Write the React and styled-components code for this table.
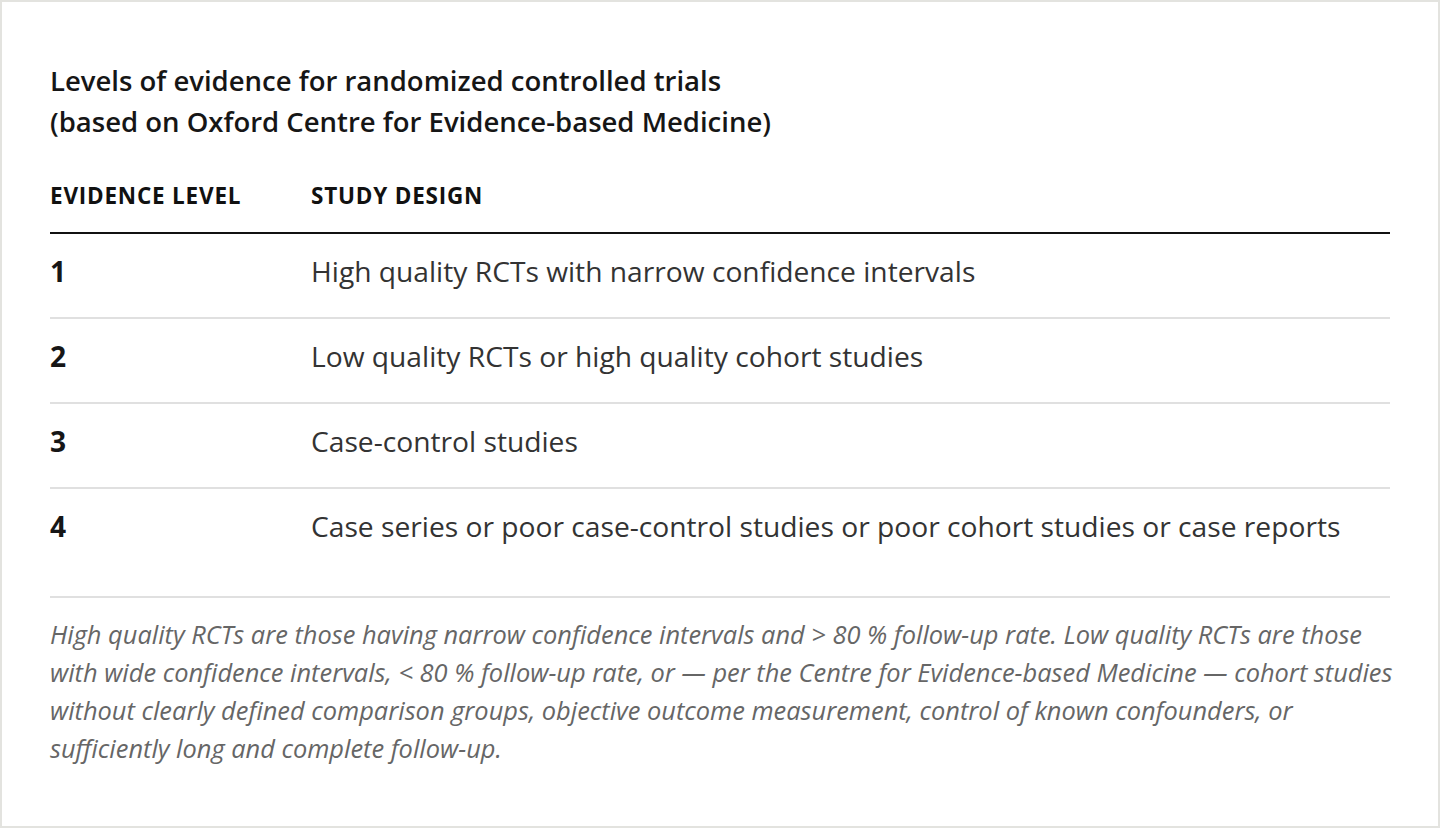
import React from "react";
import styled, { createGlobalStyle } from "styled-components";

const GlobalStyle = createGlobalStyle`
  html, body { margin: 0; padding: 0; background: #ffffff; }
  * { box-sizing: border-box; }
`;

const Frame = styled.div`
  min-height: 100vh;
  border: 2px solid #e3e3df;
  background: #ffffff;
  padding: 58px 48px 40px;
  font-family: "Open Sans", "Noto Sans", sans-serif;
  color: #333333;
`;

const Title = styled.h2`
  margin: 0 0 25px;
  font-size: 27.5px;
  line-height: 41px;
  font-weight: 600;
  color: #161616;
`;

const Table = styled.table`
  width: 100%;
  border-collapse: collapse;
`;

const HeadCell = styled.th`
  text-align: left;
  padding: 14px 0 21px;
  font-size: 22.5px;
  line-height: 30px;
  font-weight: 700;
  letter-spacing: 0.035em;
  text-transform: uppercase;
  color: #111111;
  border-bottom: 2px solid #111111;
  width: ${(p) => (p.$narrow ? "261px" : "auto")};
`;

const Row = styled.tr`
  &:not(:last-child) td { border-bottom: 2px solid #e0e0e0; }
`;

const Cell = styled.td`
  padding: 19px 0 28px;
  font-size: 28.2px;
  line-height: 36px;
  font-weight: ${(p) => (p.$strong ? 700 : 400)};
  color: ${(p) => (p.$strong ? "#161616" : "#333333")};
  vertical-align: top;
`;

const Note = styled.p`
  margin: 24px 0 0;
  padding-top: 17px;
  border-top: 2px solid #e0e0e0;
  font-size: 25.4px;
  line-height: 38px;
  font-style: italic;
  color: #666666;
  white-space: nowrap;
`;

const rows = [
  ["1", "High quality RCTs with narrow confidence intervals"],
  ["2", "Low quality RCTs or high quality cohort studies"],
  ["3", "Case-control studies"],
  ["4", "Case series or poor case-control studies or poor cohort studies or case reports"],
];

export default function App() {
  return (
    <>
      <GlobalStyle />
      <Frame>
        <Title>
          Levels of evidence for randomized controlled trials
          <br />
          (based on Oxford Centre for Evidence-based Medicine)
        </Title>
        <Table>
          <thead>
            <tr>
              <HeadCell $narrow>Evidence level</HeadCell>
              <HeadCell>Study design</HeadCell>
            </tr>
          </thead>
          <tbody>
            {rows.map(([lvl, txt]) => (
              <Row key={lvl}>
                <Cell $strong>{lvl}</Cell>
                <Cell>{txt}</Cell>
              </Row>
            ))}
          </tbody>
        </Table>
        <Note>
          High quality RCTs are those having narrow confidence intervals and &gt; 80&nbsp;% follow-up rate. Low quality RCTs are those
          <br />
          with wide confidence intervals, &lt; 80&nbsp;% follow-up rate, or — per the Centre for Evidence-based Medicine — cohort studies
          <br />
          without clearly defined comparison groups, objective outcome measurement, control of known confounders, or
          <br />
          sufficiently long and complete follow-up.
        </Note>
      </Frame>
    </>
  );
}
